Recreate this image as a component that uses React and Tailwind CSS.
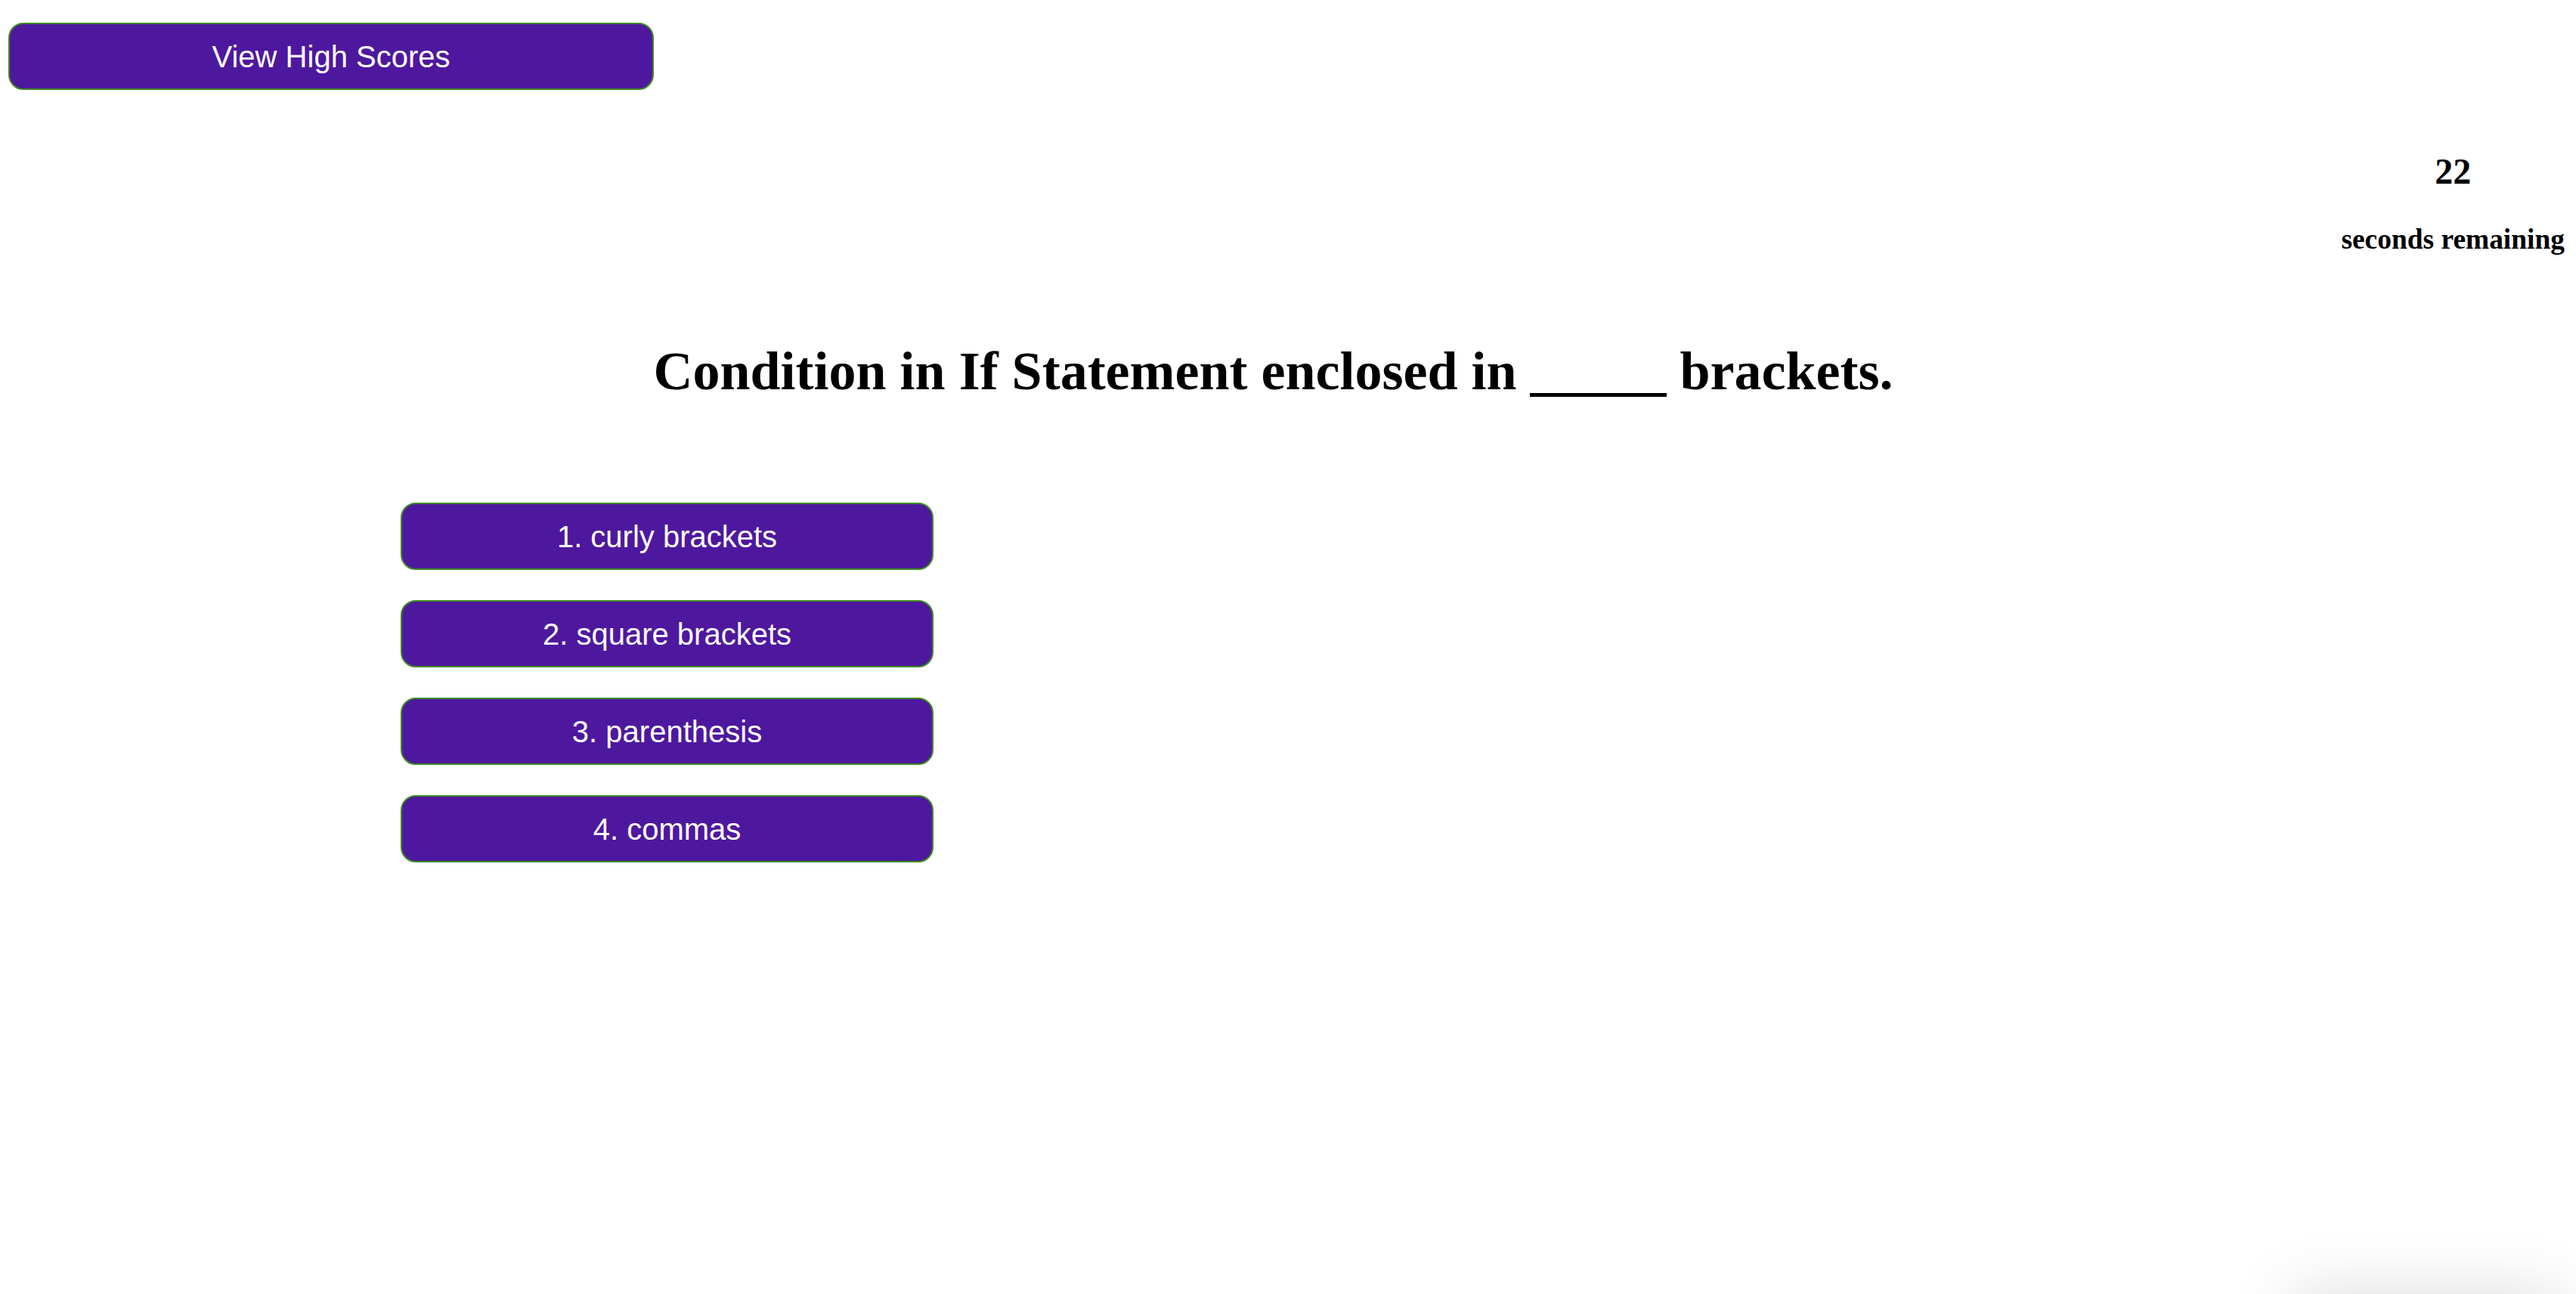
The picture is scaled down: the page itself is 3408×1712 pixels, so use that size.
import React from "react";

const answers = ["1. curly brackets", "2. square brackets", "3. parenthesis", "4. commas"];

export default function App() {
  return (
    <div className="relative min-h-screen overflow-hidden bg-white text-black">
      {/* Header */}
      <div className="pl-[11px] pt-[30px]">
        <button className="h-[89px] w-[854px] rounded-[20px] border-2 border-[#3f8a24] bg-[#4e189e] font-['Liberation_Sans',Arial,sans-serif] text-[40px] text-white">
          View High Scores
        </button>
      </div>

      {/* Timer */}
      <div className="flex justify-end pr-[15px] font-['Liberation_Serif','Times_New_Roman',serif]">
        <div className="text-center font-bold">
          <h2 className="mt-[80px] text-[48px] leading-[55px]">22</h2>
          <h3 className="mt-[41px] text-[37.44px] leading-[43px]">seconds remaining</h3>
        </div>
      </div>

      {/* Question */}
      <div className="pr-[39px] text-center font-['Liberation_Serif','Times_New_Roman',serif]">
        <h1 className="mt-[112px] text-[72px] font-bold leading-[83px]">
          Condition in If Statement enclosed in _____ brackets.
        </h1>
      </div>

      {/* Answers */}
      <div className="mt-[132px] flex flex-col gap-[40px] pl-[530px]">
        {answers.map((a) => (
          <button
            key={a}
            className="h-[89px] w-[705px] rounded-[20px] border-2 border-[#3f8a24] bg-[#4e189e] font-['Liberation_Sans',Arial,sans-serif] text-[40px] text-white"
          >
            {a}
          </button>
        ))}
      </div>

      {/* toast shadow peeking from below the viewport */}
      <div className="fixed left-[3030px] top-[1712px] h-[100px] w-[360px] rounded-[20px] bg-white shadow-[0_0_90px_rgba(0,0,0,0.14)]" />
    </div>
  );
}
